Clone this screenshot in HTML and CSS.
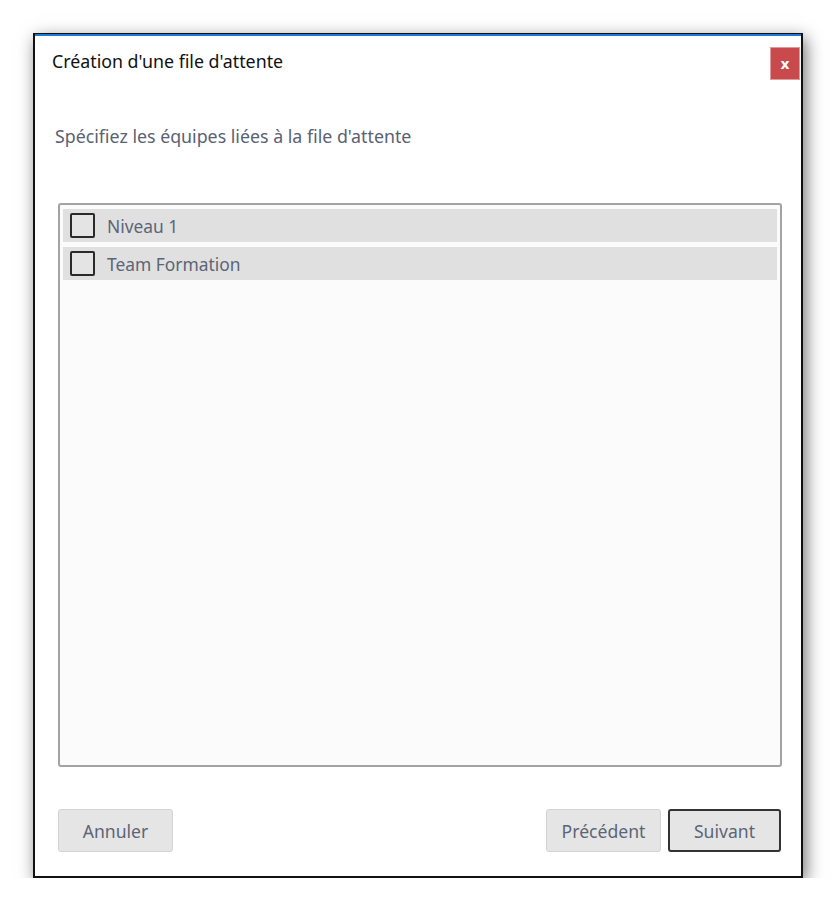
FILE: index.html
```html
<!DOCTYPE html>
<html>
<head>
    <meta charset="UTF-8">
    <title>Création d'une file d'attente</title>
    <link rel="stylesheet" href="styles.css">
</head>
<body>
    <div class="dialog">
        <div class="dialog-header">
            <div class="dialog-title">Création d'une file d'attente</div>
            <button class="close-button">x</button>
        </div>
        <p class="dialog-subtitle">Spécifiez les équipes liées à la file d'attente</p>
        <div class="team-list">
            <label class="team-item"><span class="check-box"></span>Niveau 1</label>
            <label class="team-item"><span class="check-box"></span>Team Formation</label>
        </div>
        <div class="dialog-footer">
            <button class="btn">Annuler</button>
            <div class="footer-right">
                <button class="btn">Précédent</button>
                <button class="btn btn-default">Suivant</button>
            </div>
        </div>
    </div>
</body>
</html>
```

FILE: styles.css
```css
body {
    margin: 0;
    background-color: #fff;
    font-family: "Noto Sans", "Open Sans", sans-serif;
}
.dialog {
    box-sizing: border-box;
    width: 770px;
    height: 845px;
    margin: 33px 0 0 33px;
    background-color: #fff;
    border: 2px solid #111;
    border-top-width: 1px;
    box-shadow: inset 0 2px 0 #1e78d2, 3px 5px 16px rgba(0, 0, 0, 0.55);
    display: flex;
    flex-direction: column;
}
.dialog-header {
    display: flex;
    justify-content: space-between;
    align-items: flex-start;
    height: 46px;
    padding: 13px 1px 0 17px;
    box-sizing: border-box;
}
.dialog-title {
    margin-top: 2px;
    font-size: 17.8px;
    line-height: 24px;
    color: #111;
}
.close-button {
    width: 30px;
    height: 33px;
    border: 1px solid #e09a9b;
    background-color: #c84a4c;
    color: #fff;
    font-weight: bold;
    font-size: 14px;
    font-family: "DejaVu Sans", sans-serif;
    padding: 0;
}
.dialog-subtitle {
    margin: 0;
    padding: 44px 0 0 20px;
    font-size: 17.8px;
    line-height: 24px;
    color: #5a6172;
}
.team-list {
    box-sizing: border-box;
    height: 564px;
    margin: 55px 19px 0 23px;
    padding: 4px 3px;
    border: 2px solid #a3a3a3;
    border-radius: 3px;
    background-color: #fbfbfb;
    display: flex;
    flex-direction: column;
    gap: 5px;
}
.team-item {
    display: flex;
    align-items: center;
    height: 33px;
    padding-left: 7px;
    background-color: #e0e0e0;
    color: #5b6577;
    font-size: 17.4px;
}
.check-box {
    box-sizing: border-box;
    width: 25px;
    height: 25px;
    margin-right: 12px;
    border: 2px solid #2a2a2a;
    border-radius: 2px;
    background-color: #e4e4e4;
}
.dialog-footer {
    display: flex;
    justify-content: space-between;
    margin: 42px 20px 0 23px;
}
.footer-right {
    display: flex;
    gap: 7px;
}
.btn {
    box-sizing: border-box;
    width: 115px;
    height: 43px;
    border: 1px solid #d3d3d3;
    border-radius: 3px;
    background-color: #e5e5e5;
    color: #5b6577;
    font-family: "Noto Sans", "Open Sans", sans-serif;
    font-size: 17.6px;
}
.btn-default {
    width: 113px;
    border: 2px solid #333;
}
```
